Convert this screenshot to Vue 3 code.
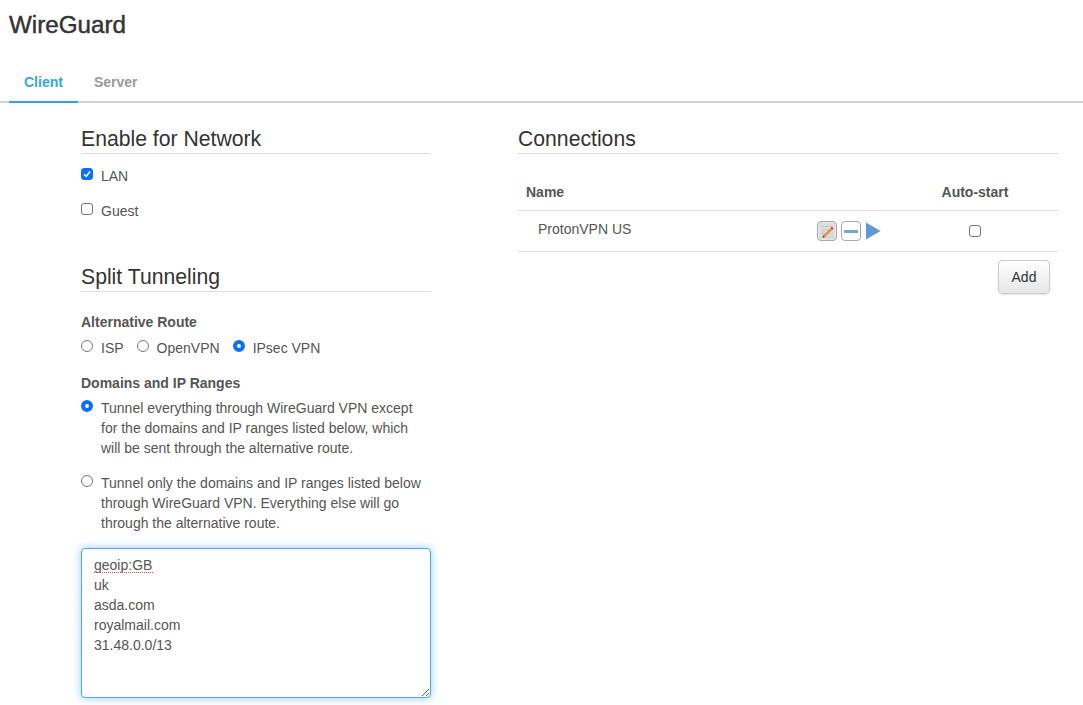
<script setup>
const networks = [
  { label: 'LAN', checked: true },
  { label: 'Guest', checked: false },
]
const routes = [
  { label: 'ISP', checked: false },
  { label: 'OpenVPN', checked: false },
  { label: 'IPsec VPN', checked: true },
]
const domains = 'geoip:GB\nuk\nasda.com\nroyalmail.com\n31.48.0.0/13'
</script>

<template>
  <div class="page">
    <h1 class="title">WireGuard</h1>
    <nav class="tabs">
      <a class="tab active">Client</a>
      <a class="tab">Server</a>
    </nav>
    <main class="columns">
      <section class="left">
        <h2 class="heading">Enable for Network</h2>
        <div class="networks">
          <label v-for="n in networks" :key="n.label" class="opt">
            <input type="checkbox" class="check" :checked="n.checked" />
            <span>{{ n.label }}</span>
          </label>
        </div>

        <h2 class="heading split">Split Tunneling</h2>
        <h3 class="sub first">Alternative Route</h3>
        <div class="routes">
          <label v-for="r in routes" :key="r.label" class="opt">
            <input type="radio" name="route" class="radio" :checked="r.checked" />
            <span>{{ r.label }}</span>
          </label>
        </div>

        <h3 class="sub second">Domains and IP Ranges</h3>
        <label class="opt para">
          <input type="radio" name="mode" class="radio" checked />
          <span>Tunnel everything through WireGuard VPN except for the domains and IP ranges listed below, which will be sent through the alternative route.</span>
        </label>
        <label class="opt para">
          <input type="radio" name="mode" class="radio" />
          <span>Tunnel only the domains and IP ranges listed below through WireGuard VPN. Everything else will go through the alternative route.</span>
        </label>

        <div class="area-wrap">
          <textarea class="area" spellcheck="false" :value="domains"></textarea>
          <span class="spell"></span>
        </div>
      </section>

      <section class="right">
        <h2 class="heading">Connections</h2>
        <table class="table">
          <thead>
            <tr>
              <th class="c-name">Name</th>
              <th class="c-actions"></th>
              <th class="c-auto">Auto-start</th>
            </tr>
          </thead>
          <tbody>
            <tr>
              <td class="c-name cell-name">ProtonVPN US</td>
              <td class="c-actions">
                <div class="actions">
                  <span class="icon-btn edit">
                    <svg width="18" height="18" viewBox="0 0 18 18">
                      <rect x="1" y="1" width="16" height="16" fill="#dedede" />
                      <path d="M3 4.5h12M3 8h12M3 11.5h12M3 15h12" stroke="#c9c9c9" stroke-width="1" />
                      <path d="M5 8.5V15" stroke="#c9c9c9" stroke-width="1" />
                      <path d="M4.5 15.8 L5.5 13 L12.6 5.9 L14.4 7.7 L7.3 14.8 Z" fill="#d9983c" />
                      <path d="M4.5 15.8 L5.3 13.4 L6.9 15 Z" fill="#4d4334" />
                      <path d="M12.6 5.9 L13.8 4.7 L15.6 6.5 L14.4 7.7 Z" fill="#d8392b" />
                    </svg>
                  </span>
                  <span class="icon-btn minus"><i></i></span>
                  <svg class="play" width="15" height="18" viewBox="0 0 15 18">
                    <path d="M0 0.5 L14.5 9 L0 17.5 Z" fill="#5f99d0" />
                  </svg>
                </div>
              </td>
              <td class="c-auto cell-auto"><input type="checkbox" class="check small" /></td>
            </tr>
          </tbody>
        </table>
        <div class="add-row"><button type="button" class="add">Add</button></div>
      </section>
    </main>
  </div>
</template>

<style>
html, body { margin: 0; background: #fff; }
</style>

<style scoped>
.page {
  height: 705px;
  overflow: hidden;
  box-sizing: border-box;
  font-family: "Liberation Sans", Arial, sans-serif;
  color: #555;
  font-size: 14px;
}
.title {
  margin: 0;
  padding: 11px 0 0 9px;
  font-size: 24.2px;
  line-height: 28px;
  font-weight: 400;
  color: #333;
  -webkit-text-stroke: 0.45px #333;
}
.tabs {
  display: flex;
  margin: 25px 0 0 0;
  padding-left: 9px;
  height: 37px;
  border-bottom: 2px solid #d4d4d4;
}
.tab {
  box-sizing: border-box;
  height: 39px;
  padding: 9px 15px 0;
  margin-right: 1px;
  font-size: 14px;
  line-height: 18px;
  font-weight: 700;
  color: #999;
}
.tab.active {
  color: #35a7df;
  border-bottom: 2px solid #2ea6e0;
}
.columns {
  display: grid;
  grid-template-columns: 350px 540px;
  column-gap: 87px;
  padding: 23px 0 0 81px;
}
.heading {
  margin: 0;
  height: 25px;
  padding-bottom: 2px;
  font-size: 21.2px;
  line-height: 25px;
  font-weight: 400;
  color: #333;
  border-bottom: 1px solid #ddd;
  box-sizing: content-box;
}
.networks {
  display: flex;
  flex-direction: column;
  gap: 17px;
  padding-top: 13px;
}
.opt {
  display: flex;
  align-items: flex-start;
  line-height: 18px;
  color: #555;
}
.check, .radio {
  appearance: none;
  -webkit-appearance: none;
  flex: none;
  box-sizing: border-box;
  width: 12px;
  height: 12px;
  margin: 1px 8px 0 0;
  background: #fff;
  border: 1px solid #767676;
}
.check { border-radius: 3px; }
.check:checked {
  background: #0b6ff5 url("data:image/svg+xml,%3Csvg xmlns='http://www.w3.org/2000/svg' width='10' height='10'%3E%3Cpath d='M2 5.2 L4.2 7.4 L8 2.6' fill='none' stroke='white' stroke-width='1.6'/%3E%3C/svg%3E") center no-repeat;
  border-color: #0b6ff5;
}
.radio { border-radius: 50%; }
.radio:checked {
  border: 4px solid #0b6ff5;
  background: #fff;
}
.small { display: block; margin: 0 auto; }
.split { margin-top: 44px; }
.sub {
  margin: 0;
  font-size: 14px;
  line-height: 18px;
  font-weight: 700;
  color: #555;
}
.sub.first { margin-top: 21px; }
.sub.second { margin-top: 17px; }
.routes {
  display: flex;
  gap: 13px;
  margin-top: 8px;
}
.para { margin-top: 6px; line-height: 20px; }
.para + .para { margin-top: 15px; }
.para .radio { margin-top: 2px; }
.area-wrap {
  position: relative;
  margin-top: 15px;
  height: 150px;
}
.area {
  display: block;
  box-sizing: border-box;
  width: 350px;
  height: 150px;
  padding: 6px 12px;
  margin: 0;
  font: 14px/20px "Liberation Sans", Arial, sans-serif;
  color: #555;
  background: #fff;
  border: 1px solid #52a8ec;
  border-radius: 4px;
  outline: none;
  box-shadow: 0 0 8px rgba(82, 168, 236, 0.6);
}
.spell {
  position: absolute;
  left: 13px;
  top: 24px;
  width: 59px;
  border-bottom: 1px dotted #ee4a5c;
}
.right { min-width: 0; }
.table {
  width: 540px;
  border-collapse: collapse;
  table-layout: fixed;
  margin-top: 19px;
}
.table th {
  height: 37px;
  padding: 0;
  font-size: 14px;
  font-weight: 700;
  color: #555;
  border-bottom: 1px solid #ddd;
}
.table td {
  height: 40px;
  padding: 0;
  border-bottom: 1px solid #ddd;
  color: #555;
}
.c-name { width: 290px; text-align: left; padding-left: 8px !important; box-sizing: border-box; }
.cell-name { padding-left: 20px !important; padding-bottom: 5px !important; }
.c-actions { width: 130px; }
.c-auto { text-align: center; width: 120px; padding-right: 46px !important; box-sizing: border-box; }
.cell-auto { padding-bottom: 1px !important; }
.actions {
  display: flex;
  align-items: center;
  gap: 4px;
  padding-left: 9px;
}
.icon-btn {
  box-sizing: border-box;
  display: flex;
  align-items: center;
  justify-content: center;
  width: 20px;
  height: 20px;
  border: 1px solid #a9a9a9;
  border-radius: 4px;
  background: #fff;
}
.edit { background: #e8e8e8; }
.minus i {
  display: block;
  width: 14px;
  height: 3px;
  background: #7da7d0;
}
.play { margin-left: 1px; }
.add-row {
  display: flex;
  justify-content: flex-end;
  padding: 8px 8px 0 0;
}
.add {
  box-sizing: border-box;
  width: 52px;
  height: 34px;
  padding: 0;
  font: 14px "Liberation Sans", Arial, sans-serif;
  color: #333;
  border: 1px solid #ccc;
  border-radius: 4px;
  background: linear-gradient(#fff, #e6e6e6);
  box-shadow: 0 1px 2px rgba(0, 0, 0, 0.1);
}
</style>
